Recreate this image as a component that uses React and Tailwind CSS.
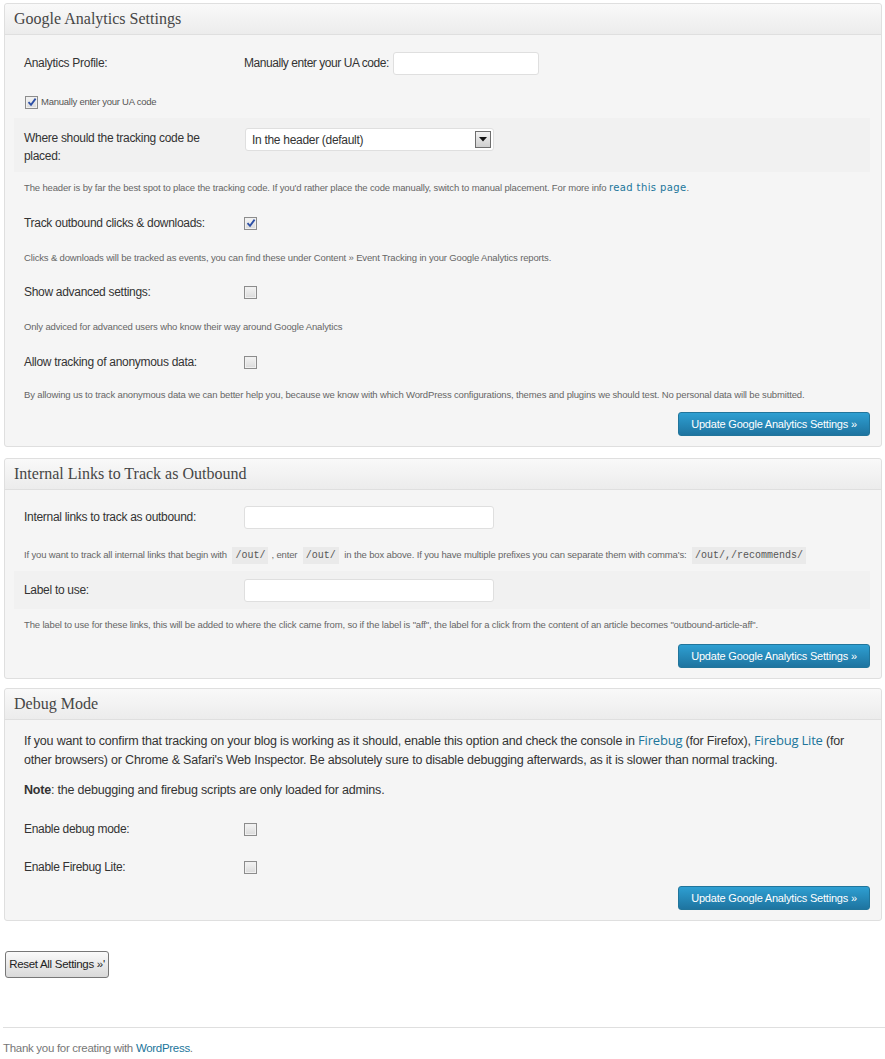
import React from 'react';

const sans = "font-['Liberation_Sans',Arial,sans-serif]";

function Checkbox({ checked }) {
  return (
    <span className="inline-flex items-center justify-center w-[13px] h-[13px] border border-[#8c8c8c] bg-gradient-to-b from-[#f4f4f4] to-[#dadada] shadow-[inset_0_0_0_1px_#f0f0f0]">
      {checked && (
        <svg width="10" height="10" viewBox="0 0 10 10">
          <path d="M1.5 5.2 L4 7.8 L8.6 1.6" fill="none" stroke="#2c4fa6" strokeWidth="1.8" />
        </svg>
      )}
    </span>
  );
}

function BlueButton() {
  return (
    <button className={`h-[24px] w-[192px] rounded-[3px] border border-[#21759b] bg-gradient-to-b from-[#2e9fd2] to-[#1e74a0] text-white text-[11px] tracking-[-0.2px] ${sans}`}>
      Update Google Analytics Settings »
    </button>
  );
}

function Panel({ title, children }) {
  return (
    <div className="border border-[#dfdfdf] rounded-[3px] bg-[#f5f5f5]">
      <div className="h-[31px] flex items-center pl-[9px] border-b border-[#dfdfdf] bg-gradient-to-b from-[#f9f9f9] to-[#ececec] rounded-t-[3px]">
        <h2 className="font-['Liberation_Serif',serif] text-[16px] text-[#464646]">{title}</h2>
      </div>
      <div className="pl-[9px] pr-[11px]">{children}</div>
    </div>
  );
}

function Row({ h, label, children, shaded }) {
  return (
    <div className={`flex items-center pl-[10px] ${h} ${shaded ? 'bg-[#f1f1f1]' : ''}`}>
      <div className="w-[220px] shrink-0 text-[12px] tracking-[-0.3px] text-[#333]">{label}</div>
      <div className="flex items-center">{children}</div>
    </div>
  );
}

function Desc({ h, children }) {
  return <div className={`flex items-center pl-[10px] text-[9.5px] tracking-[-0.15px] text-[#666] ${h}`}>{children}</div>;
}

function TextInput({ w }) {
  return <input type="text" className={`h-[23px] ${w} bg-white border border-[#dfdfdf] rounded-[3px] outline-none`} />;
}

function Code({ children }) {
  return (
    <code className="font-['Liberation_Mono',monospace] text-[10px] tracking-normal text-[#555] bg-[#eaeaea] px-[3px] py-[3px] mx-[3px]">{children}</code>
  );
}

export default function App() {
  return (
    <div className={`${sans} bg-white w-[885px] min-h-[1059px] text-[#333]`}>
      <div className="pt-[3px] pl-[4px] pr-[3px]">
        <Panel title="Google Analytics Settings">
          <div className="pt-[5px]">
            <div className="flex items-center pl-[10px] h-[46px] text-[12px] tracking-[-0.3px]">
              <div className="w-[220px]">Analytics Profile:</div>
              <span className="tracking-[-0.45px] mr-[4px]">Manually enter your UA code:</span>
              <TextInput w="w-[146px]" />
            </div>
            <div className="flex items-center pl-[11px] h-[32px] text-[9.5px] tracking-[-0.25px] text-[#555]">
              <Checkbox checked />
              <span className="ml-[3px]">Manually enter your UA code</span>
            </div>
            <div className="flex items-start pl-[10px] pt-[10px] h-[54px] bg-[#f1f1f1]">
              <div className="w-[221px] text-[12px] tracking-[-0.3px] leading-[18px] mt-[1px] pr-[24px]">Where should the tracking code be placed:</div>
              <div className="flex items-center h-[23px] w-[249px] bg-white border border-[#dfdfdf] rounded-[3px] pl-[6px] pr-[2px]">
                <span className="flex-1 text-[12px] tracking-[-0.3px]">In the header (default)</span>
                <span className="w-[16px] h-[17px] border border-[#6e6e6e] bg-gradient-to-b from-[#f2f2f2] to-[#cfcfcf] flex items-center justify-center">
                  <svg width="8" height="5" viewBox="0 0 8 5"><path d="M0 0 L8 0 L4 4.5 Z" fill="#111" /></svg>
                </span>
              </div>
            </div>
            <Desc h="h-[32px]">
              <span>
                The header is by far the best spot to place the tracking code. If you'd rather place the code manually, switch to manual placement. For more info{' '}
                <a className="font-['DejaVu_Sans',sans-serif] text-[10px] tracking-[0.4px] text-[#21759b] leading-none">read this page</a>.
              </span>
            </Desc>
            <Row h="h-[38px]" label="Track outbound clicks & downloads:"><Checkbox checked /></Row>
            <Desc h="h-[32px]">Clicks &amp; downloads will be tracked as events, you can find these under Content » Event Tracking in your Google Analytics reports.</Desc>
            <Row h="h-[36px]" label="Show advanced settings:"><Checkbox /></Row>
            <Desc h="h-[34px]">Only adviced for advanced users who know their way around Google Analytics</Desc>
            <Row h="h-[36px]" label="Allow tracking of anonymous data:"><Checkbox /></Row>
            <Desc h="h-[30px]">By allowing us to track anonymous data we can better help you, because we know with which WordPress configurations, themes and plugins we should test. No personal data will be submitted.</Desc>
            <div className="flex justify-end mt-[2px] pb-[10px]"><BlueButton /></div>
          </div>
        </Panel>

        <div className="mt-[11px]">
          <Panel title="Internal Links to Track as Outbound">
            <div className="pt-[5px]">
              <Row h="h-[44px]" label="Internal links to track as outbound:"><TextInput w="w-[250px]" /></Row>
              <Desc h="h-[32px]">
                <span>
                  If you want to track all internal links that begin with <Code>/out/</Code>, enter <Code>/out/</Code> in the box above. If you have multiple prefixes you can separate them with comma's: <Code>/out/,/recommends/</Code>
                </span>
              </Desc>
              <Row h="h-[38px]" label="Label to use:" shaded><TextInput w="w-[250px]" /></Row>
              <Desc h="h-[33px]">The label to use for these links, this will be added to where the click came from, so if the label is "aff", the label for a click from the content of an article becomes "outbound-article-aff".</Desc>
              <div className="flex justify-end mt-[2px] pb-[10px]"><BlueButton /></div>
            </div>
          </Panel>
        </div>

        <div className="mt-[9px]">
          <Panel title="Debug Mode">
            <div className="pl-[10px] pt-[12px] text-[12.5px] tracking-[-0.2px] leading-[19px] pr-[4px]">
              <p>
                If you want to confirm that tracking on your blog is working as it should, enable this option and check the console in{' '}
                <a className="font-['Open_Sans',sans-serif] text-[13px] tracking-[-0.2px] text-[#21759b] leading-none">Firebug</a> (for Firefox),{' '}
                <a className="font-['Open_Sans',sans-serif] text-[13px] tracking-[-0.2px] text-[#21759b] leading-none">Firebug Lite</a> (for other browsers) or Chrome &amp; Safari's Web Inspector. Be absolutely sure to disable debugging afterwards, as it is slower than normal tracking.
              </p>
              <p className="mt-[11px]"><b>Note</b>: the debugging and firebug scripts are only loaded for admins.</p>
            </div>
            <div className="mt-[10px]">
              <Row h="h-[38px]" label="Enable debug mode:"><Checkbox /></Row>
              <Row h="h-[38px]" label="Enable Firebug Lite:"><Checkbox /></Row>
            </div>
            <div className="flex justify-end pb-[10px]"><BlueButton /></div>
          </Panel>
        </div>
      </div>

      <div className="pl-[5px] mt-[30px]">
        <button className="h-[27px] w-[104px] border border-[#777] rounded-[3px] bg-gradient-to-b from-[#fafafa] to-[#d9d9d9] text-[11.5px] tracking-[-0.3px] text-[#222]">
          Reset All Settings »'
        </button>
      </div>

      <div className="mt-[49px] ml-[3px] border-t border-[#dfdfdf] pt-[12px] text-[11.5px] tracking-[-0.3px] text-[#777]">
        Thank you for creating with <a className="text-[#21759b]">WordPress</a>.
      </div>
    </div>
  );
}
